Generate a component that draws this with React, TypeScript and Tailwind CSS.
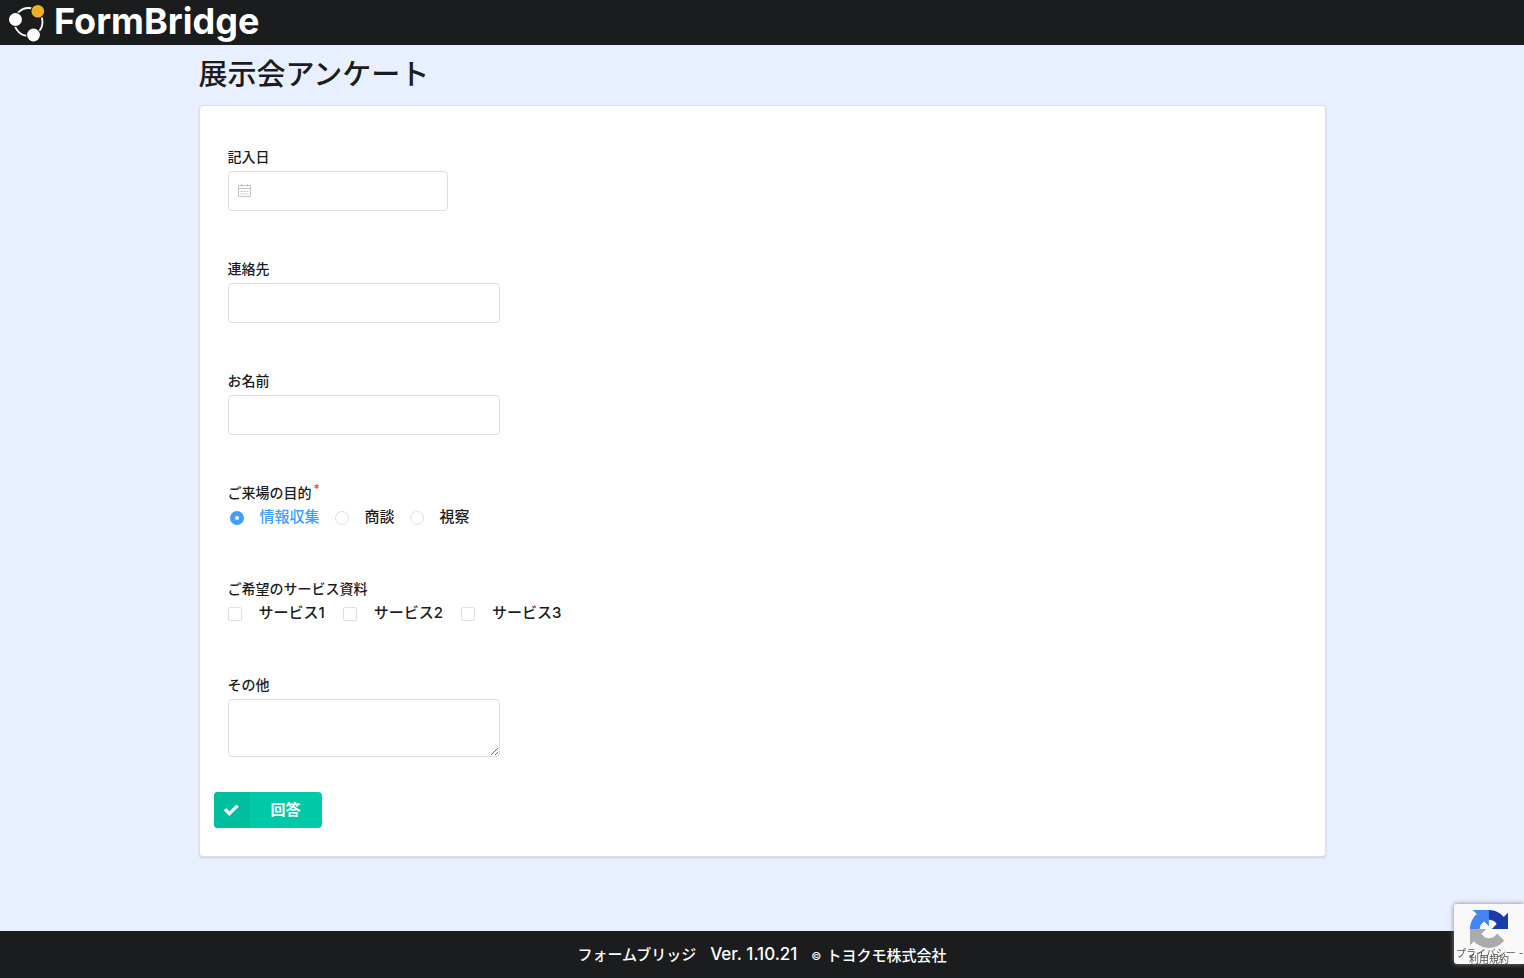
import { useState } from "react";
import type { ReactNode } from "react";

const purposes = ["情報収集", "商談", "視察"];
const services = ["サービス1", "サービス2", "サービス3"];

const labelClass = "block h-[18px] text-[14px] leading-[18px] font-medium";
const optionClass = "flex items-center text-[15px] leading-[22px] font-medium";
const boxClass =
  "block rounded-[4px] border border-[#dcdee2] bg-white text-[14px] outline-none focus:border-[#409eff]";

function Logo() {
  return (
    <svg width="38" height="38" viewBox="0 0 38 38" aria-hidden="true">
      <circle cx="20.5" cy="18" r="14" fill="none" stroke="#fff" strokeWidth="1.8" />
      <circle cx="7.5" cy="15.5" r="7.4" fill="#1b1c1d" />
      <circle cx="29.8" cy="7.3" r="7.4" fill="#1b1c1d" />
      <circle cx="25.5" cy="31" r="7.4" fill="#1b1c1d" />
      <circle cx="7.5" cy="15.5" r="6.5" fill="#fff" />
      <circle cx="29.8" cy="7.3" r="6.3" fill="#ebb024" />
      <circle cx="25.5" cy="31" r="6.4" fill="#fff" />
    </svg>
  );
}

function CalendarIcon() {
  return (
    <svg
      width="14"
      height="14"
      viewBox="0 0 14 14"
      fill="none"
      stroke="#c0c4cc"
      aria-hidden="true"
      className="pointer-events-none absolute top-[13px] left-[9px]"
    >
      <path d="M1.5 1.5h12v11h-12zM1.5 4.5h12M4.5 0v2.4M10.5 0v2.4" />
      <path d="M3.5 7.5h2M6.5 7.5h2M9.5 7.5h2M3.5 10h2M6.5 10h2M9.5 10h2" />
    </svg>
  );
}

function RecaptchaLogo() {
  return (
    <svg width="38" height="38" viewBox="0 0 64 64" aria-hidden="true">
      <path
        fill="#1c3aa9"
        d="M64 31.955l-.033-1.37V4.687l-7.16 7.16C50.948 4.674 42.033.093 32.05.093c-10.4 0-19.622 4.96-25.458 12.64l11.736 11.86a15.55 15.55 0 0 1 4.754-5.334c2.05-1.6 4.952-2.906 8.968-2.906.485 0 .86.057 1.135.163 4.976.393 9.288 3.14 11.828 7.124l-8.307 8.307L64 31.953"
      />
      <path
        fill="#4285f4"
        d="M31.862.094l-1.37.033H4.594l7.16 7.16C4.58 13.147 0 22.06 0 32.046c0 10.4 4.96 19.622 12.64 25.458L24.5 45.768a15.55 15.55 0 0 1-5.334-4.754c-1.6-2.05-2.906-4.952-2.906-8.968 0-.485.057-.86.163-1.135.393-4.976 3.14-9.288 7.124-11.828l8.307 8.307L31.86.095"
      />
      <path
        fill="#ababab"
        d="M.001 32.045l.033 1.37v25.898l7.16-7.16c5.86 7.173 14.774 11.754 24.76 11.754 10.4 0 19.622-4.96 25.458-12.64l-11.736-11.86a15.55 15.55 0 0 1-4.754 5.334c-2.05 1.6-4.952 2.906-8.968 2.906-.485 0-.86-.057-1.135-.163-4.976-.393-9.288-3.14-11.828-7.124l8.307-8.307-27.297.003"
      />
    </svg>
  );
}

function Field({ id, label, children }: { id: string; label: string; children: ReactNode }) {
  return (
    <div className="flex flex-col gap-[5px]">
      <label htmlFor={id} className={labelClass}>
        {label}
      </label>
      {children}
    </div>
  );
}

export default function App() {
  const [purpose, setPurpose] = useState(purposes[0]);

  return (
    <div className="flex min-h-screen flex-col bg-[#e8efff] font-['Inter','Noto_Sans_CJK_JP',sans-serif] text-[#1b1c1d]">
      <header className="flex h-[45px] items-center gap-2 bg-[#1b1c1d] px-2">
        <Logo />
        <span className="pb-[3px] text-[36px] leading-[42px] font-bold text-white">FormBridge</span>
      </header>

      <main className="mx-auto w-full max-w-[1127px] flex-1">
        <h1 className="pt-[9px] text-[29px] leading-[42px] font-medium">展示会アンケート</h1>
        <form
          onSubmit={(e) => e.preventDefault()}
          className="mt-[9px] mb-14 rounded-[4px] border border-[#dcdfe8] bg-white px-[14px] pt-[42px] pb-7 shadow-[0_1px_2px_rgba(34,36,38,0.15)]"
        >
          <div className="flex flex-col gap-[49px] px-[14px]">
            <Field id="date" label="記入日">
              <div className="relative w-[220px]">
                <CalendarIcon />
                <input id="date" type="text" className={`${boxClass} h-10 w-full pr-3 pl-[30px]`} />
              </div>
            </Field>
            <Field id="contact" label="連絡先">
              <input id="contact" type="text" className={`${boxClass} h-10 w-[272px] px-3`} />
            </Field>
            <Field id="name" label="お名前">
              <input id="name" type="text" className={`${boxClass} h-10 w-[272px] px-3`} />
            </Field>

            <fieldset className="h-[47px]">
              <legend className={labelClass}>
                ご来場の目的
                <span className="ml-[2px] inline-block align-top text-[12px] leading-[10px] text-[#e8472b]">*</span>
              </legend>
              <div className="flex gap-[15px] pt-1 pl-[2px]">
                {purposes.map((p) => (
                  <label key={p} className={`${optionClass} gap-4 has-checked:text-[#409eff]`}>
                    <input
                      type="radio"
                      name="purpose"
                      checked={purpose === p}
                      onChange={() => setPurpose(p)}
                      className="mt-[2px] size-[14px] appearance-none rounded-full border border-[#dcdfe6] bg-white checked:border-[5px] checked:border-[#409eff]"
                    />
                    {p}
                  </label>
                ))}
              </div>
            </fieldset>

            <fieldset className="h-[47px]">
              <legend className={labelClass}>ご希望のサービス資料</legend>
              <div className="flex gap-[18px] pt-1">
                {services.map((s) => (
                  <label key={s} className={`${optionClass} gap-[17px]`}>
                    <input
                      type="checkbox"
                      className="mt-[2px] size-[14px] appearance-none rounded-[2px] border border-[#dcdfe6] bg-white checked:bg-[#409eff]"
                    />
                    {s}
                  </label>
                ))}
              </div>
            </fieldset>

            <Field id="other" label="その他">
              <textarea id="other" className={`${boxClass} h-[58px] w-[272px] px-3 py-2`} />
            </Field>
          </div>

          <button
            type="submit"
            className="mt-[35px] flex h-9 w-[108px] overflow-hidden rounded-[4px] bg-[#00c9a7] text-[15px] leading-9 font-bold text-white"
          >
            <span className="flex h-9 w-9 items-center justify-center bg-[#00bd9d]">
              <svg width="18" height="12" viewBox="0 0 18 12" aria-hidden="true">
                <path d="M2 5.2l4.4 4.4L14.6 1.6" fill="none" stroke="#e6f9f5" strokeWidth="3.4" />
              </svg>
            </span>
            <span className="flex-1">回答</span>
          </button>
        </form>
      </main>

      <footer className="flex h-[47px] items-center justify-center bg-[#1b1c1d] text-[15px] font-medium text-white">
        <p className="flex items-baseline gap-[14px]">
          <span>フォームブリッジ</span>
          <span className="text-[17px]">Ver. 1.10.21</span>
          <span className="flex items-center gap-[5px]">
            <span className="text-[11px]">©</span>
            トヨクモ株式会社
          </span>
        </p>
      </footer>

      <aside className="fixed right-0 bottom-[14px] flex h-[60px] w-[70px] flex-col items-center rounded-l-[3px] bg-[#f9f9f9] pt-[6px] text-[10px] text-[#555] shadow-[0_0_5px_gray]">
        <RecaptchaLogo />
        <div className="flex w-full flex-col items-center">
          <span className="h-[6px] w-full pl-[2px] leading-[10px] whitespace-nowrap">
            <a href="#privacy">プライバシー</a> -
          </span>
          <a href="#terms" className="leading-[10px]">
            利用規約
          </a>
        </div>
      </aside>
    </div>
  );
}
